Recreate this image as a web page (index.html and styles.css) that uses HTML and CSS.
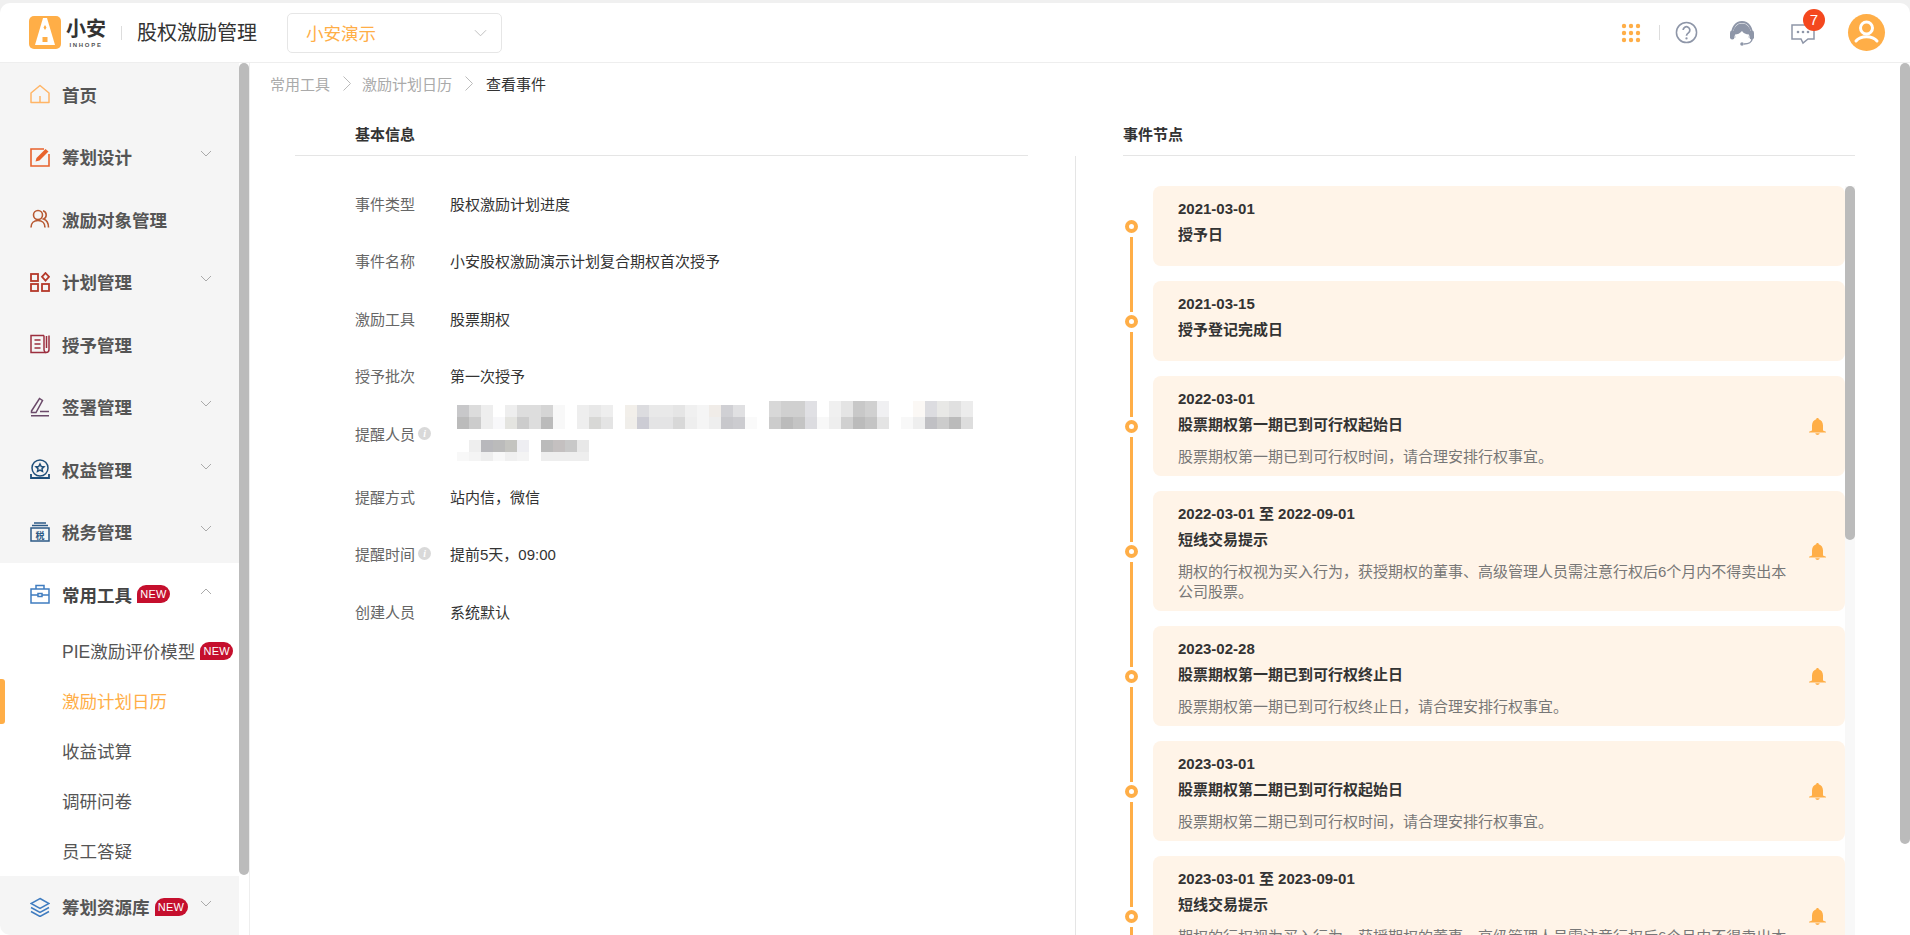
FILE: index.html
```html
<!DOCTYPE html>
<html lang="zh-CN">
<head>
<meta charset="utf-8">
<title>股权激励管理</title>
<link rel="stylesheet" href="styles.css">
</head>
<body>
<div class="app">
  <header class="topbar">
    <div class="logo">
      <svg class="logo-mark" viewBox="0 0 32 33"><rect width="32" height="33" rx="5" fill="#ffae47"/><path d="M14 2h4l8 27H6z" fill="#fff"/><path d="M16 9l1.500 2.500-1.500 2.500-1.500-2.500zM13.500 21h5v5h-5z" fill="#ffae47"/></svg>
      <div class="logo-text"><span class="logo-cn">小安</span><span class="logo-en">INHOPE</span></div>
    </div>
    <span class="logo-sep"></span>
    <h1 class="app-title">股权激励管理</h1>
    <div class="company-select"><span>小安演示</span>
      <svg class="chev-lg" viewBox="0 0 14 8"><path d="M1 1l6 6 6-6" fill="none" stroke="#bbb" stroke-width="1"/></svg>
    </div>
    <div class="top-actions">
      <svg class="ic-grid" viewBox="0 0 20 20" fill="#ffae47"><circle cx="3" cy="3" r="2.200"/><circle cx="10" cy="3" r="2.200"/><circle cx="17" cy="3" r="2.200"/><circle cx="3" cy="10" r="2.200"/><circle cx="10" cy="10" r="2.200"/><circle cx="17" cy="10" r="2.200"/><circle cx="3" cy="17" r="2.200"/><circle cx="10" cy="17" r="2.200"/><circle cx="17" cy="17" r="2.200"/></svg>
      <span class="act-sep"></span>
      <svg class="ic-help" viewBox="0 0 24 24"><circle cx="12" cy="12" r="10.500" fill="none" stroke="#8e96a8" stroke-width="1.600"/><path d="M8.500 9.500a3.500 3.500 0 1 1 5.500 2.900c-1.300.9-2 1.500-2 3" fill="none" stroke="#8e96a8" stroke-width="1.800"/><circle cx="12" cy="18.200" r="1.200" fill="#8e96a8"/></svg>
      <svg class="ic-headset" viewBox="0 0 26 26"><path d="M3 15C3 7 7 2 13 2s10 5 10 13" fill="none" stroke="#8e96a8" stroke-width="2"/><circle cx="13" cy="12" r="8.500" fill="#8e96a8"/><path d="M6 14.500c2.500 0 5-1 7-3.500 1.200 2 4 3.500 7 3.500 0 4-3 7.500-7 7.500s-7-3.500-7-7.500z" fill="#fff"/><rect x="1" y="10.500" width="4.500" height="9" rx="2.200" fill="#8e96a8"/><rect x="20.500" y="10.500" width="4.500" height="9" rx="2.200" fill="#8e96a8"/><path d="M23 19c0 3-3.500 5-8 5" fill="none" stroke="#8e96a8" stroke-width="1.500"/><circle cx="13" cy="24" r="1.800" fill="#8e96a8"/></svg>
      <div class="msg">
        <svg class="ic-msg" viewBox="0 0 24 22"><path d="M1 2h22v14h-6l-5 4-2-4H1z" fill="none" stroke="#8e96a8" stroke-width="1.500"/><circle cx="7" cy="9" r="1.300" fill="#8e96a8"/><circle cx="12" cy="9" r="1.300" fill="#8e96a8"/><circle cx="17" cy="9" r="1.300" fill="#8e96a8"/></svg>
        <span class="msg-badge">7</span>
      </div>
      <div class="avatar">
        <svg viewBox="0 0 37 37"><circle cx="18.500" cy="14" r="6" fill="none" stroke="#fff" stroke-width="3"/><path d="M8 27c2.500-3 6-4.200 10.500-4.200S26.500 24 29 27" fill="none" stroke="#fff" stroke-width="3" stroke-linecap="round"/></svg>
      </div>
    </div>
  </header>

  <div class="layout">
    <nav class="sidebar">
      <a class="nav-item"><svg class="nav-ic" viewBox="0 0 20 20"><path d="M10 1.500L1 9v9.500h18V9z" fill="none" stroke="#ffb566" stroke-width="1.500" stroke-linejoin="round"/><path d="M10 12v6" stroke="#ffb566" stroke-width="1.500"/></svg><span class="nav-label">首页</span></a>
      <a class="nav-item"><svg class="nav-ic" viewBox="0 0 20 20"><path d="M14 2H1v17h18V7" fill="none" stroke="#e8622c" stroke-width="1.600"/><path d="M5.500 14.500l1-3.500L15.500 2l3 2.500-9 9z" fill="#e8622c"/></svg><span class="nav-label">筹划设计</span><svg class="chev" viewBox="0 0 12 7"><path d="M1 1l5 5 5-5" fill="none" stroke="#aaa"/></svg></a>
      <a class="nav-item"><svg class="nav-ic" viewBox="0 0 20 20"><circle cx="8" cy="6" r="4.500" fill="none" stroke="#b85a33" stroke-width="1.600"/><path d="M1 18.500c0-4.500 3-7 7-7s7 2.500 7 7" fill="none" stroke="#b85a33" stroke-width="1.600"/><path d="M13 1.800c2 .5 3.200 2.200 3.200 4.200s-1 3.300-2.700 4c3 1 5 3.800 5 8.500" fill="none" stroke="#b85a33" stroke-width="1.600"/></svg><span class="nav-label">激励对象管理</span></a>
      <a class="nav-item"><svg class="nav-ic" viewBox="0 0 20 20" fill="none" stroke="#b5392a" stroke-width="1.800"><rect x="1" y="2" width="7" height="7"/><rect x="1" y="12" width="7" height="7"/><rect x="12" y="12" width="7" height="7"/><path d="M15.500 1l3.500 3.800-3.500 3.800-3.500-3.800z"/></svg><span class="nav-label">计划管理</span><svg class="chev" viewBox="0 0 12 7"><path d="M1 1l5 5 5-5" fill="none" stroke="#aaa"/></svg></a>
      <a class="nav-item"><svg class="nav-ic" viewBox="0 0 20 20" fill="none" stroke="#9c2f3f" stroke-width="1.500"><path d="M14 1.500H1v17h15c1.800 0 3-1 3-3v-14"/><path d="M14 1.500v14c0 1.500 1 3 2 3M4.500 6h6M4.500 10h6M4.500 14h6M16.500 2v12"/></svg><span class="nav-label">授予管理</span></a>
      <a class="nav-item"><svg class="nav-ic" viewBox="0 0 20 20" fill="none" stroke="#6b4a6a" stroke-width="1.500"><path d="M1.500 14L9.500 1.500l3 2L6 15.500H1.500z"/><path d="M10 14.500h9M1 18.800h18"/></svg><span class="nav-label">签署管理</span><svg class="chev" viewBox="0 0 12 7"><path d="M1 1l5 5 5-5" fill="none" stroke="#aaa"/></svg></a>
      <a class="nav-item"><svg class="nav-ic" viewBox="0 0 20 20" fill="none" stroke="#1e4f7a" stroke-width="1.500"><circle cx="10" cy="9" r="8"/><path d="M10 5l1.300 2.600 2.700.3-2 1.900.5 2.700-2.500-1.300-2.500 1.300.5-2.700-2-1.900 2.700-.3z"/><path d="M1 15v4h18v-4" stroke-width="1.800"/></svg><span class="nav-label">权益管理</span><svg class="chev" viewBox="0 0 12 7"><path d="M1 1l5 5 5-5" fill="none" stroke="#aaa"/></svg></a>
      <a class="nav-item"><svg class="nav-ic" viewBox="0 0 20 20" fill="none" stroke="#2d5a86" stroke-width="1.500"><path d="M4 1h12M2 3.500h16"/><rect x="1" y="6" width="18" height="13"/><text x="10" y="16.500" text-anchor="middle" class="tax-text">税</text></svg><span class="nav-label">税务管理</span><svg class="chev" viewBox="0 0 12 7"><path d="M1 1l5 5 5-5" fill="none" stroke="#aaa"/></svg></a>
      <div class="nav-group">
        <a class="nav-item nav-open"><svg class="nav-ic" viewBox="0 0 20 20" fill="none" stroke="#3f7cc0" stroke-width="1.500"><rect x="1" y="5" width="18" height="14"/><path d="M6 5V1.500h8V5M1 11h18"/><rect x="8" y="9.500" width="4" height="3" fill="#fff"/></svg><span class="nav-label">常用工具</span><span class="new-badge">NEW</span><svg class="chev" viewBox="0 0 12 7"><path d="M1 6l5-5 5 5" fill="none" stroke="#aaa"/></svg></a>
        <a class="sub-item"><span>PIE激励评价模型</span><span class="new-badge">NEW</span></a>
        <a class="sub-item sub-active"><span>激励计划日历</span></a>
        <a class="sub-item"><span>收益试算</span></a>
        <a class="sub-item"><span>调研问卷</span></a>
        <a class="sub-item"><span>员工答疑</span></a>
      </div>
      <a class="nav-item"><svg class="nav-ic" viewBox="0 0 20 20" fill="none" stroke="#3f7cc0" stroke-width="1.500"><path d="M10 1.500L19 6.500 10 11.500 1 6.500z"/><path d="M1 10.500l9 5 9-5M1 14.500l9 5 9-5"/></svg><span class="nav-label">筹划资源库</span><span class="new-badge">NEW</span><svg class="chev" viewBox="0 0 12 7"><path d="M1 1l5 5 5-5" fill="none" stroke="#aaa"/></svg></a>
      <div class="track track-side"><div class="thumb thumb-side"></div></div>
    </nav>

    <main class="main">
      <div class="crumbs">
        <span>常用工具</span>
        <svg class="crumb-sep" viewBox="0 0 8 15"><path d="M.5.500l7 7-7 7" fill="none" stroke="#bbb"/></svg>
        <span>激励计划日历</span>
        <svg class="crumb-sep" viewBox="0 0 8 15"><path d="M.5.500l7 7-7 7" fill="none" stroke="#bbb"/></svg>
        <span class="crumb-current">查看事件</span>
      </div>
      <div class="columns">
        <section class="col-info">
          <h2 class="section-head head-info">基本信息</h2>
          <dl class="info-list">
            <div class="info-row"><dt>事件类型</dt><dd>股权激励计划进度</dd></div>
            <div class="info-row"><dt>事件名称</dt><dd>小安股权激励演示计划复合期权首次授予</dd></div>
            <div class="info-row"><dt>激励工具</dt><dd>股票期权</dd></div>
            <div class="info-row"><dt>授予批次</dt><dd>第一次授予</dd></div>
            <div class="info-row info-row-tall"><dt>提醒人员<i class="tip">i</i></dt><dd>
              <svg class="mosaic" viewBox="0 0 520 58" shape-rendering="crispEdges">
                <g class="m-a">
                  <rect x="0" y="0" width="12" height="12" fill="#c8c8ca"/><rect x="12" y="0" width="12" height="12" fill="#dcdcdc"/><rect x="24" y="0" width="12" height="12" fill="#eee"/><rect x="48" y="0" width="12" height="12" fill="#eee"/><rect x="60" y="0" width="24" height="12" fill="#ddd"/><rect x="84" y="0" width="12" height="12" fill="#d5d5d5"/><rect x="96" y="0" width="12" height="12" fill="#f8f8f8"/>
                  <rect x="120" y="0" width="12" height="12" fill="#eee"/><rect x="132" y="0" width="12" height="12" fill="#e8e8e8"/><rect x="144" y="0" width="12" height="12" fill="#eee"/><rect x="168" y="0" width="12" height="12" fill="#f2efea"/><rect x="180" y="0" width="12" height="12" fill="#dcdcdf"/><rect x="192" y="0" width="24" height="12" fill="#e9e9e9"/><rect x="216" y="0" width="12" height="12" fill="#e5e5e5"/><rect x="228" y="0" width="12" height="12" fill="#f0f0f0"/><rect x="240" y="0" width="12" height="12" fill="#f5f5f5"/><rect x="252" y="0" width="12" height="12" fill="#f0ece8"/><rect x="264" y="0" width="12" height="12" fill="#d0d0d4"/><rect x="276" y="0" width="12" height="12" fill="#e0e0e2"/>
                  <rect x="312" y="-4" width="12" height="16" fill="#d8d8d8"/><rect x="324" y="-4" width="24" height="16" fill="#d0d0d0"/><rect x="348" y="-4" width="12" height="16" fill="#e0e0e4"/><rect x="372" y="-4" width="12" height="16" fill="#f0f0f0"/><rect x="384" y="-4" width="12" height="16" fill="#e4e4e4"/><rect x="396" y="-4" width="12" height="16" fill="#c8c8c8"/><rect x="408" y="-4" width="12" height="16" fill="#d0d0d0"/><rect x="420" y="-4" width="12" height="16" fill="#f0f0f2"/><rect x="456" y="-4" width="12" height="16" fill="#fbf8f5"/><rect x="468" y="-4" width="12" height="16" fill="#dcdce0"/><rect x="480" y="-4" width="12" height="16" fill="#e8e8e6"/><rect x="492" y="-4" width="12" height="16" fill="#e0e0e0"/><rect x="504" y="-4" width="12" height="16" fill="#ececec"/>
                </g>
                <g class="m-b">
                  <rect x="0" y="12" width="12" height="12" fill="#bbb"/><rect x="12" y="12" width="12" height="12" fill="#ccc"/><rect x="24" y="12" width="12" height="12" fill="#eee"/><rect x="36" y="12" width="12" height="12" fill="#f8f8fa"/><rect x="48" y="12" width="12" height="12" fill="#e4e4e0"/><rect x="60" y="12" width="12" height="12" fill="#ccc"/><rect x="72" y="12" width="12" height="12" fill="#ddd"/><rect x="84" y="12" width="12" height="12" fill="#bbb"/><rect x="96" y="12" width="12" height="12" fill="#f8f8f8"/>
                  <rect x="120" y="12" width="12" height="12" fill="#eee"/><rect x="132" y="12" width="12" height="12" fill="#d8d8d6"/><rect x="144" y="12" width="12" height="12" fill="#e4e4e4"/><rect x="168" y="12" width="12" height="12" fill="#f0eeea"/><rect x="180" y="12" width="12" height="12" fill="#ccccd4"/><rect x="192" y="12" width="24" height="12" fill="#e4e4e5"/><rect x="216" y="12" width="12" height="12" fill="#d8d8d8"/><rect x="228" y="12" width="12" height="12" fill="#eee"/><rect x="240" y="12" width="12" height="12" fill="#f5f5f5"/><rect x="252" y="12" width="12" height="12" fill="#eee"/><rect x="264" y="12" width="12" height="12" fill="#c8c8cc"/><rect x="276" y="12" width="12" height="12" fill="#ccccd0"/><rect x="288" y="12" width="12" height="12" fill="#fafafa"/>
                  <rect x="312" y="12" width="12" height="12" fill="#ccc"/><rect x="324" y="12" width="12" height="12" fill="#bbb"/><rect x="336" y="12" width="12" height="12" fill="#c4c4c4"/><rect x="348" y="12" width="12" height="12" fill="#dcdce0"/><rect x="360" y="12" width="12" height="12" fill="#f8f8f8"/><rect x="372" y="12" width="12" height="12" fill="#eee"/><rect x="384" y="12" width="12" height="12" fill="#d0d0d0"/><rect x="396" y="12" width="12" height="12" fill="#bbb"/><rect x="408" y="12" width="12" height="12" fill="#c4c4c4"/><rect x="420" y="12" width="12" height="12" fill="#e4e4e4"/><rect x="444" y="12" width="12" height="12" fill="#f8f8f8"/><rect x="456" y="12" width="12" height="12" fill="#eee"/><rect x="468" y="12" width="12" height="12" fill="#c0c0c4"/><rect x="480" y="12" width="12" height="12" fill="#ccc"/><rect x="492" y="12" width="12" height="12" fill="#bbb"/><rect x="504" y="12" width="12" height="12" fill="#ddd"/>
                </g>
                <g class="m-c">
                  <rect x="12" y="35" width="12" height="12" fill="#eee"/><rect x="24" y="35" width="12" height="12" fill="#b8b8bc"/><rect x="36" y="35" width="12" height="12" fill="#bbb"/><rect x="48" y="35" width="12" height="12" fill="#c4c4c0"/><rect x="60" y="35" width="12" height="12" fill="#eeeef2"/><rect x="84" y="35" width="12" height="12" fill="#bbb"/><rect x="96" y="35" width="12" height="12" fill="#c4c0c0"/><rect x="108" y="35" width="12" height="12" fill="#c8c8c8"/><rect x="120" y="35" width="12" height="12" fill="#e8e8e8"/>
                  <rect x="0" y="47" width="12" height="9" fill="#f8f8f8"/><rect x="12" y="47" width="12" height="9" fill="#f4f4f4"/><rect x="24" y="47" width="12" height="9" fill="#eee"/><rect x="36" y="47" width="12" height="9" fill="#f8f8f8"/><rect x="48" y="47" width="12" height="9" fill="#f0f0f0"/><rect x="60" y="47" width="12" height="9" fill="#f4f4f4"/><rect x="84" y="47" width="48" height="9" fill="#eee"/>
                </g>
              </svg></dd></div>
            <div class="info-row"><dt>提醒方式</dt><dd>站内信，微信</dd></div>
            <div class="info-row"><dt>提醒时间<i class="tip">i</i></dt><dd>提前5天，09:00</dd></div>
            <div class="info-row"><dt>创建人员</dt><dd>系统默认</dd></div>
          </dl>
        </section>
        <section class="col-events">
          <h2 class="section-head head-events">事件节点</h2>
          <div class="events-body">
            <div class="timeline">
              <div class="tl-row tl-first"><div class="tl-axis"><i class="tl-line"></i><i class="tl-dot"></i><i class="tl-line"></i></div>
                <article class="tl-card tl-card-short"><div class="tl-text"><div class="tl-date">2021-03-01</div><div class="tl-title">授予日</div></div></article></div>
              <div class="tl-row"><div class="tl-axis"><i class="tl-line"></i><i class="tl-dot"></i><i class="tl-line"></i></div>
                <article class="tl-card tl-card-short"><div class="tl-text"><div class="tl-date">2021-03-15</div><div class="tl-title">授予登记完成日</div></div></article></div>
              <div class="tl-row"><div class="tl-axis"><i class="tl-line"></i><i class="tl-dot"></i><i class="tl-line"></i></div>
                <article class="tl-card"><div class="tl-text"><div class="tl-date">2022-03-01</div><div class="tl-title">股票期权第一期已到可行权起始日</div><p class="tl-desc">股票期权第一期已到可行权时间，请合理安排行权事宜。</p></div>
                <svg class="bell" viewBox="0 0 17 17"><path d="M8.500 0c.8 0 1.200.5 1.300 1.200C12.500 2 14 4.500 14 7.500V12.500l3 1.300V14.500H0v-.7l3-1.300V7.500c0-3 1.500-5.500 4.200-6.300C7.300.500 7.700 0 8.500 0zM6.300 15.300h4.400c-.3 1-1.100 1.700-2.200 1.700s-1.900-.7-2.200-1.700z" fill="#ffae47"/></svg></article></div>
              <div class="tl-row"><div class="tl-axis"><i class="tl-line"></i><i class="tl-dot"></i><i class="tl-line"></i></div>
                <article class="tl-card"><div class="tl-text"><div class="tl-date">2022-03-01 至 2022-09-01</div><div class="tl-title">短线交易提示</div><p class="tl-desc">期权的行权视为买入行为，获授期权的董事、高级管理人员需注意行权后6个月内不得卖出本公司股票。</p></div>
                <svg class="bell" viewBox="0 0 17 17"><path d="M8.500 0c.8 0 1.200.5 1.300 1.200C12.500 2 14 4.500 14 7.500V12.500l3 1.300V14.500H0v-.7l3-1.300V7.500c0-3 1.500-5.500 4.200-6.300C7.300.500 7.700 0 8.500 0zM6.300 15.300h4.400c-.3 1-1.100 1.700-2.200 1.700s-1.900-.7-2.200-1.700z" fill="#ffae47"/></svg></article></div>
              <div class="tl-row"><div class="tl-axis"><i class="tl-line"></i><i class="tl-dot"></i><i class="tl-line"></i></div>
                <article class="tl-card"><div class="tl-text"><div class="tl-date">2023-02-28</div><div class="tl-title">股票期权第一期已到可行权终止日</div><p class="tl-desc">股票期权第一期已到可行权终止日，请合理安排行权事宜。</p></div>
                <svg class="bell" viewBox="0 0 17 17"><path d="M8.500 0c.8 0 1.200.5 1.300 1.200C12.500 2 14 4.500 14 7.500V12.500l3 1.300V14.500H0v-.7l3-1.300V7.500c0-3 1.500-5.500 4.200-6.300C7.300.500 7.700 0 8.500 0zM6.300 15.300h4.400c-.3 1-1.100 1.700-2.200 1.700s-1.900-.7-2.200-1.700z" fill="#ffae47"/></svg></article></div>
              <div class="tl-row"><div class="tl-axis"><i class="tl-line"></i><i class="tl-dot"></i><i class="tl-line"></i></div>
                <article class="tl-card"><div class="tl-text"><div class="tl-date">2023-03-01</div><div class="tl-title">股票期权第二期已到可行权起始日</div><p class="tl-desc">股票期权第二期已到可行权时间，请合理安排行权事宜。</p></div>
                <svg class="bell" viewBox="0 0 17 17"><path d="M8.500 0c.8 0 1.200.5 1.300 1.200C12.500 2 14 4.500 14 7.500V12.500l3 1.300V14.500H0v-.7l3-1.300V7.500c0-3 1.500-5.500 4.200-6.300C7.300.500 7.700 0 8.500 0zM6.300 15.300h4.400c-.3 1-1.100 1.700-2.200 1.700s-1.900-.7-2.200-1.700z" fill="#ffae47"/></svg></article></div>
              <div class="tl-row"><div class="tl-axis"><i class="tl-line"></i><i class="tl-dot"></i><i class="tl-line"></i></div>
                <article class="tl-card"><div class="tl-text"><div class="tl-date">2023-03-01 至 2023-09-01</div><div class="tl-title">短线交易提示</div><p class="tl-desc">期权的行权视为买入行为，获授期权的董事、高级管理人员需注意行权后6个月内不得卖出本公司股票。</p></div>
                <svg class="bell" viewBox="0 0 17 17"><path d="M8.500 0c.8 0 1.200.5 1.300 1.200C12.500 2 14 4.500 14 7.500V12.500l3 1.300V14.500H0v-.7l3-1.300V7.500c0-3 1.500-5.500 4.200-6.300C7.300.500 7.700 0 8.500 0zM6.300 15.300h4.400c-.3 1-1.100 1.700-2.200 1.700s-1.900-.7-2.200-1.700z" fill="#ffae47"/></svg></article></div>
              <div class="track track-list"><div class="thumb thumb-list"></div></div>
            </div>
          </div>
        </section>
      </div>
      <div class="track track-main"><div class="thumb thumb-main"></div></div>
    </main>
  </div>
</div>
</body>
</html>
```
FILE: styles.css
```css
* { box-sizing: border-box; }
html, body { margin: 0; height: 100%; overflow: hidden; }
body {
  background: #f0f0f0;
  color: #333;
  font-family: "Liberation Sans", "Noto Sans CJK SC", sans-serif;
  font-size: 15px;
}
h1, h2, p, dl, dd { margin: 0; }
.app { display: flex; flex-direction: column; height: 100vh; padding-top: 3px; }

/* top bar */
.topbar {
  display: flex; align-items: center; flex: none;
  height: 60px; padding: 0 25px 0 29px;
  background: #fff; border-bottom: 1px solid #eee;
  border-radius: 10px 10px 0 0;
}
.logo { display: flex; align-items: center; gap: 5px; }
.logo-mark { width: 32px; height: 33px; display: block; }
.logo-text { display: flex; flex-direction: column; align-items: center; width: 40px; }
.logo-cn { font-size: 20px; line-height: 24px; font-weight: 700; color: #333; }
.logo-en { font-size: 6px; line-height: 8px; letter-spacing: 1.700px; color: #555; font-weight: 700; white-space: nowrap; }
.logo-sep { width: 1px; height: 14px; background: #ddd; margin: 0 15px 0 15px; }
.app-title { font-size: 20px; font-weight: 400; color: #333; line-height: 28px; width: 120px; white-space: nowrap; }
.company-select {
  display: flex; align-items: center; justify-content: space-between;
  width: 215px; height: 40px; margin-left: 30px; padding: 0 14px 0 18px;
  border: 1px solid #e6e6e6; border-radius: 5px;
  color: #ffae47; font-size: 17.500px;
}
.chev-lg { width: 13px; height: 8px; }
.top-actions { display: flex; align-items: center; margin-left: auto; }
.ic-grid { width: 20px; height: 20px; }
.act-sep { width: 1px; height: 15px; background: #ddd; margin: 0 15px 0 18px; }
.ic-help { width: 23px; height: 23px; }
.ic-headset { width: 26px; height: 26px; margin-left: 31.500px; }
.msg { position: relative; margin-left: 36px; width: 24px; height: 22px; margin-top: 2px; }
.ic-msg { width: 24px; height: 22px; display: block; }
.msg-badge {
  position: absolute; left: 12px; top: -14px;
  width: 22px; height: 22px; border-radius: 50%;
  background: #f4481e; color: #fff; font-size: 15px; line-height: 22px; text-align: center;
}
.avatar { width: 37px; height: 37px; margin-left: 33px; border-radius: 50%; background: #ffae47; }
.avatar svg { display: block; width: 37px; height: 37px; }

/* layout */
.layout { display: flex; flex: 1; min-height: 0; background: #fff; }

/* drawn scrollbars */
.track { position: absolute; top: 0; right: 0; bottom: 0; width: 10px; }
.thumb { width: 10px; background: #bbb; border-radius: 5px; }
.track-side { background: #fff; }
.thumb-side { height: 812px; }
.track-main { background: #fff; }
.thumb-main { height: 781px; }
.track-list { background: #f8f8f8; height: 749px; bottom: auto; }
.thumb-list { height: 354px; }

/* sidebar */
.sidebar {
  position: relative; flex: none; width: 250px; height: 100%; padding-right: 10px;
  overflow: hidden; background: #f5f5f5;
  border-right: 1px solid #eee; border-bottom-left-radius: 10px;
}
.nav-item {
  display: flex; align-items: center; height: 62.500px; padding: 0 27px 0 30px;
  color: #555; font-size: 17.500px; font-weight: 700; white-space: nowrap;
}
.nav-ic { width: 20px; height: 20px; flex: none; margin-right: 12px; }
.tax-text { font-size: 9px; fill: #2d5a86; stroke: none; font-weight: 700; }
.chev { width: 12px; height: 7px; margin-left: auto; margin-bottom: 6px; flex: none; }
.nav-group { background: #fff; }
.nav-open { color: #444; }
.new-badge {
  flex: none; margin-left: 5px; width: 33px; height: 18px;
  border-radius: 9px 9px 9px 0; background: #c50f2d; color: #fff;
  font-size: 11px; font-weight: 400; line-height: 18px; text-align: center; letter-spacing: .2px;
}
.sub-item {
  display: flex; align-items: center; height: 50px; padding-left: 62px;
  color: #555; font-size: 17.500px; white-space: nowrap; position: relative;
}
.sub-active { color: #ffae47; }
.sub-active::before {
  content: ""; position: absolute; left: 0; top: 3px; width: 5px; height: 45px;
  background: #ffae47; border-radius: 0 3px 3px 0;
}

/* main */
.main { position: relative; flex: 1; min-width: 0; height: 100%; overflow: hidden; padding-right: 10px; background: #fff; }
.crumbs {
  display: flex; align-items: center; height: 40px; margin-bottom: 2px; padding-left: 20px;
  color: #aaa; font-size: 15px;
}
.crumb-sep { width: 8px; height: 15px; margin: 0 11px 0 13px; }
.crumb-current { color: #333; margin-left: 2px; }
.columns { display: grid; grid-template-columns: 825px 825px; }
.section-head {
  height: 51px; padding-top: 17px; line-height: 26px; font-size: 15px; font-weight: 700;
  color: #333; border-bottom: 1px solid #e5e5e5;
}
.head-info { margin: 0 47px 0 45px; padding-left: 60px; }
.head-events { margin: 0 45px 0 48px; }

/* info */
.info-list { padding: 18.500px 0 0 105px; }
.info-row { display: flex; align-items: center; min-height: 57.500px; }
.info-row dt { width: 95px; flex: none; display: flex; align-items: center; gap: 3px; color: #666; white-space: nowrap; }
.info-row dd { color: #333; }
.info-row-tall { min-height: 62.500px; padding-bottom: 5px; }
.tip {
  display: block; width: 13px; height: 13px; border-radius: 50%; background: #d9d9d9;
  color: #fff; font: italic 700 10px/13px "Liberation Serif", serif; text-align: center;
}
.mosaic { display: block; width: 520px; height: 58px; margin-left: 7px; overflow: visible; filter: blur(.6px); }

/* timeline */
.events-body { border-left: 1px solid #e5e5e5; padding: 30px 45px 0 47px; }
.timeline { position: relative; height: 749px; overflow: hidden; padding-right: 10px; }
.tl-row { display: flex; margin-bottom: 15px; }
.tl-axis {
  flex: none; width: 17px; margin: -7px 13px -8px 0;
  display: flex; flex-direction: column; align-items: center;
}
.tl-line { flex: 1; width: 3px; background: #ffae47; }
.tl-first .tl-line:first-child { visibility: hidden; }
.tl-dot {
  flex: none; width: 13px; height: 13px; margin: 3.500px 0; border-radius: 50%;
  background: #fff; border: 4px solid #ffae47;
}
.tl-card {
  flex: 1; min-width: 0; display: flex; align-items: center;
  padding: 10px 19px 9px 25px; background: #fff4e8; border-radius: 8px;
}
.tl-card-short { padding-bottom: 18px; }
.tl-text { flex: 1; min-width: 0; padding-right: 9px; }
.tl-date, .tl-title { font-size: 15px; line-height: 26px; font-weight: 700; color: #333; }
.tl-desc { margin-top: 9px; font-size: 15px; line-height: 20px; color: #777; }
.bell { width: 17px; height: 17px; flex: none; }
```
